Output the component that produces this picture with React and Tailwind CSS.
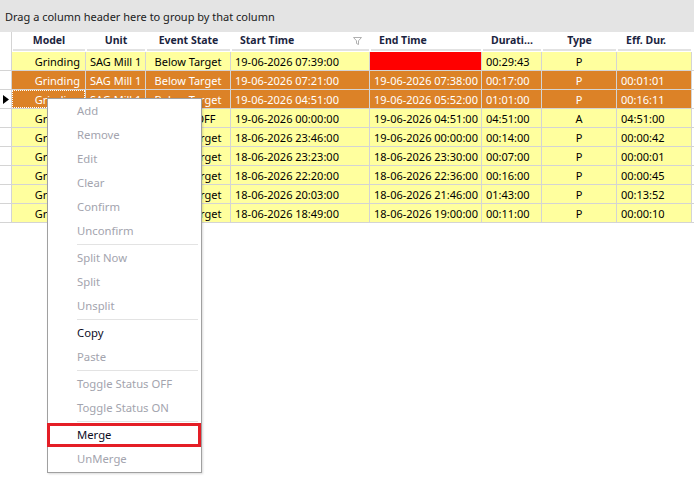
import React from "react";

const YELLOW = "bg-[#ffff9e]";
const ORANGE = "bg-[#dc8227]";

const columns = [
  { key: "model", label: "Model", w: "w-[74px]", head: "justify-center", cell: "justify-end pr-[5px]" },
  { key: "unit", label: "Unit", w: "w-[60px]", head: "justify-center", cell: "justify-start pl-[4px]" },
  { key: "state", label: "Event State", w: "w-[85px]", head: "justify-center", cell: "justify-center" },
  { key: "start", label: "Start Time", w: "w-[139px]", head: "justify-start pl-[8px]", cell: "justify-start pl-[4px]", filter: true },
  { key: "end", label: "End Time", w: "w-[112px]", head: "justify-start pl-[8px]", cell: "justify-start pl-[4px]" },
  { key: "dur", label: "Durati...", w: "w-[60px]", head: "justify-start pl-[8px]", cell: "justify-start pl-[4px]" },
  { key: "type", label: "Type", w: "w-[75px]", head: "justify-center", cell: "justify-center" },
  { key: "eff", label: "Eff. Dur.", w: "w-[75px]", head: "justify-start pl-[8px]", cell: "justify-start pl-[4px]" },
];

const rows = [
  { tone: "y", model: "Grinding", unit: "SAG Mill 1", state: "Below Target", start: "19-06-2026 07:39:00", end: "", dur: "00:29:43", type: "P", eff: "", red: true },
  { tone: "o", model: "Grinding", unit: "SAG Mill 1", state: "Below Target", start: "19-06-2026 07:21:00", end: "19-06-2026 07:38:00", dur: "00:17:00", type: "P", eff: "00:01:01" },
  { tone: "o", model: "Grinding", unit: "SAG Mill 1", state: "Below Target", start: "19-06-2026 04:51:00", end: "19-06-2026 05:52:00", dur: "01:01:00", type: "P", eff: "00:16:11", current: true },
  { tone: "y", model: "Grinding", unit: "SAG Mill 1", state: "Status OFF", start: "19-06-2026 00:00:00", end: "19-06-2026 04:51:00", dur: "04:51:00", type: "A", eff: "04:51:00" },
  { tone: "y", model: "Grinding", unit: "SAG Mill 1", state: "Below Target", start: "18-06-2026 23:46:00", end: "19-06-2026 00:00:00", dur: "00:14:00", type: "P", eff: "00:00:42" },
  { tone: "y", model: "Grinding", unit: "SAG Mill 1", state: "Below Target", start: "18-06-2026 23:23:00", end: "18-06-2026 23:30:00", dur: "00:07:00", type: "P", eff: "00:00:01" },
  { tone: "y", model: "Grinding", unit: "SAG Mill 1", state: "Below Target", start: "18-06-2026 22:20:00", end: "18-06-2026 22:36:00", dur: "00:16:00", type: "P", eff: "00:00:45" },
  { tone: "y", model: "Grinding", unit: "SAG Mill 1", state: "Below Target", start: "18-06-2026 20:03:00", end: "18-06-2026 21:46:00", dur: "01:43:00", type: "P", eff: "00:13:52" },
  { tone: "y", model: "Grinding", unit: "SAG Mill 1", state: "Below Target", start: "18-06-2026 18:49:00", end: "18-06-2026 19:00:00", dur: "00:11:00", type: "P", eff: "00:00:10" },
];

// context menu groups, null = separator
const menu = [
  { label: "Add" },
  { label: "Remove" },
  { label: "Edit" },
  { label: "Clear" },
  { label: "Confirm" },
  { label: "Unconfirm" },
  null,
  { label: "Split Now" },
  { label: "Split" },
  { label: "Unsplit" },
  null,
  { label: "Copy", enabled: true },
  { label: "Paste" },
  null,
  { label: "Toggle Status OFF" },
  { label: "Toggle Status ON" },
  null,
  { label: "Merge", enabled: true, boxed: true },
  { label: "UnMerge" },
];

function FilterIcon() {
  return (
    <svg width="9" height="8" viewBox="0 0 9 8" className="absolute right-[8px] top-[5px]">
      <path d="M0.5 0.5 H8.5 L5.5 3.8 V7.5 L3.5 6.5 V3.8 Z" fill="none" stroke="#b0b0b0" strokeWidth="1" />
    </svg>
  );
}

function HeaderRow() {
  return (
    <div className="flex h-[20px] bg-white">
      <div className="w-[12px] h-full border-r border-[#d4d4d4]" />
      {columns.map((c) => (
        <div key={c.key} className={`${c.w} h-full px-[1px] pb-[1px] relative`}>
          <div className={`h-full flex items-center ${c.head} border-b-2 border-[#e2e2e2] font-bold text-[10.5px] text-[#1b2440]`}>
            {c.label}
          </div>
          {c.filter && <FilterIcon />}
        </div>
      ))}
      <div className="flex-1" />
    </div>
  );
}

function DataRow({ row }) {
  const bg = row.tone === "o" ? ORANGE : YELLOW;
  const text = row.tone === "o" ? "text-white" : "text-black";
  return (
    <div className="flex h-[19px]">
      <div className="w-[12px] h-full border-r border-b border-[#d4d4d4] bg-white flex items-center justify-center">
        {row.current && (
          <svg width="6" height="9" viewBox="0 0 6 9">
            <path d="M0 0 L6 4.5 L0 9 Z" fill="#000" />
          </svg>
        )}
      </div>
      {columns.map((c) => {
        const red = row.red && c.key === "end";
        return (
          <div
            key={c.key}
            className={`${c.w} h-full border-r border-b border-[#d4d4d4] ${red ? "bg-[#ff0000]" : bg} ${text} flex items-center ${c.cell} whitespace-nowrap overflow-hidden relative`}
          >
            {row.current && c.key === "model" && (
              <div className="absolute inset-0 border border-dotted border-white" />
            )}
            {row[c.key]}
          </div>
        );
      })}
      <div className="flex-1 h-full border-b border-[#d4d4d4] bg-white" />
    </div>
  );
}

function ContextMenu() {
  return (
    <div className="absolute left-[47px] top-[98px] w-[155px] bg-white border border-[#a0a0a0] pb-px text-[11.3px] shadow-[1px_1px_2px_rgba(0,0,0,0.15)]">
      {menu.map((item, i) =>
        item === null ? (
          <div key={i} className="h-[3px] flex items-center pl-[29px] pr-[3px]">
            <div className="h-px w-full bg-[#e3e3e3]" />
          </div>
        ) : (
          <div
            key={i}
            className={`h-[24px] flex items-center pl-[29px] relative ${item.enabled ? "text-[#0d0d1f]" : "text-[#a3a4ae]"}`}
          >
            {item.label}
            {item.boxed && (
              <div className="absolute -left-px right-0 top-0 bottom-0 border-[3px] border-[#e41e26]" />
            )}
          </div>
        )
      )}
    </div>
  );
}

export default function App() {
  return (
    <div
      className="w-[694px] h-[496px] bg-white relative overflow-hidden text-[11px] leading-none"
      style={{ fontFamily: '"Noto Sans", "Open Sans", sans-serif' }}
    >
      {/* group-by panel */}
      <div className="h-[32px] bg-[#e4e4e4] flex items-center pl-[5px] text-[#202020]">
        Drag a column header here to group by that column
      </div>

      <HeaderRow />
      {rows.map((r, i) => (
        <DataRow key={i} row={r} />
      ))}

      <ContextMenu />
    </div>
  );
}
